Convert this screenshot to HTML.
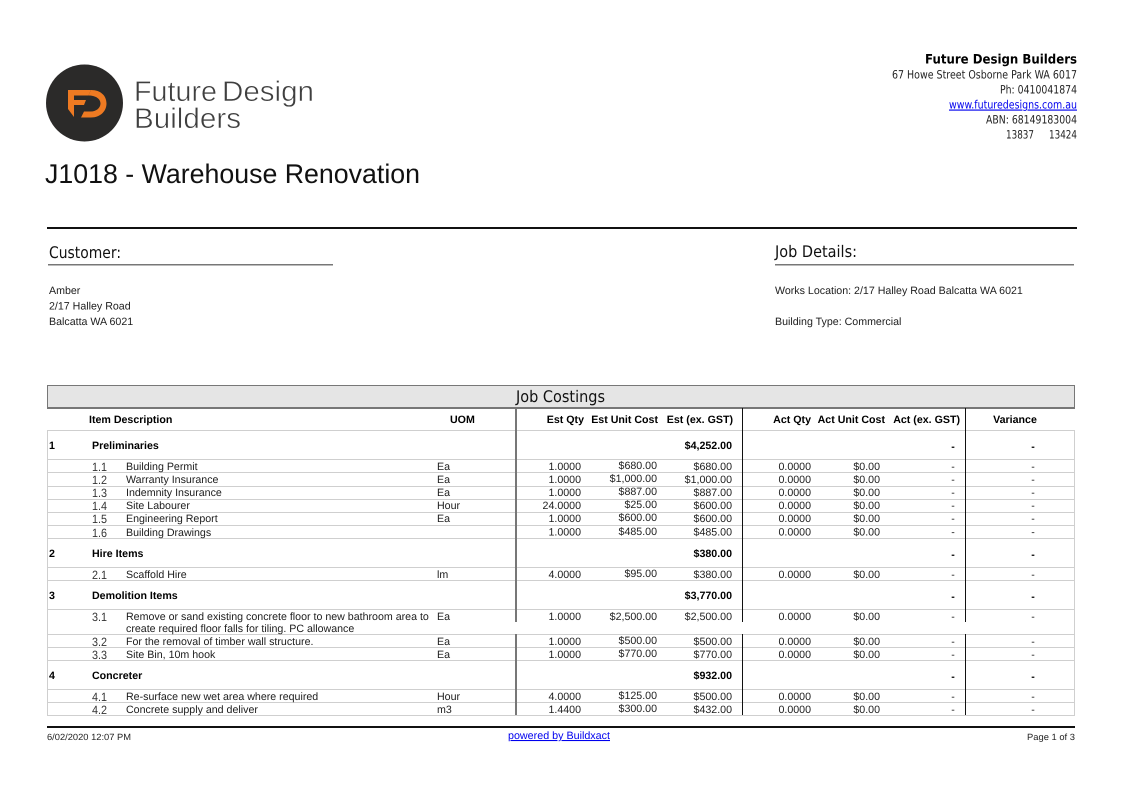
<!DOCTYPE html>
<html><head><meta charset="utf-8"><title>J1018 - Warehouse Renovation</title>
<style>
html,body{margin:0;padding:0;background:#fff}
svg{display:block}
text{font-family:"Liberation Sans",Arial,sans-serif;font-size:10.65px;fill:#1c1c1c;text-rendering:geometricPrecision}
.e{text-anchor:end}.m{text-anchor:middle}
.b{font-weight:bold;fill:#000}
.t{font-family:"DejaVu Sans",sans-serif}
.n{font-family:"DejaVu Sans",sans-serif;font-size:11.5px;fill:#222}
.o{font-size:12px;fill:#333}
.h{font-family:"DejaVu Sans",sans-serif;font-size:16px;fill:#111}
.l{stroke:#cfcfcf;stroke-width:1}
.lk{fill:#0000ee;text-decoration:underline}
.lg{fill:#3f3f3f;stroke:#fff;stroke-width:.55;font-size:28.500px}
.f{font-size:9px;fill:#222}
</style></head><body>
<svg xmlns="http://www.w3.org/2000/svg" width="1123" height="794" viewBox="0 0 1123 794">
<rect width="1123" height="794" fill="#fff"/>

<!-- logo -->
<circle cx="84.500" cy="103" r="38.500" fill="#2b2a29"/>
<path fill="#ee7a22" d="M68 90H91L88.500 95.500H74V100H86L84 105H74V117L68 109Z"/>
<path fill="#ee7a22" d="M91 90C101 90 106.500 96 106.500 103.500C106.500 111 100.500 117.500 91 117.500H81L84 111.500H91C96 111.500 100.500 108 100.500 103.500C100.500 99 96 95.500 88.500 95.500Z"/>
<text class="lg" x="134" y="101" textLength="83" lengthAdjust="spacingAndGlyphs">Future</text>
<text class="lg" x="222" y="101" textLength="92" lengthAdjust="spacingAndGlyphs">Design</text>
<text class="lg" x="134" y="128" textLength="107" lengthAdjust="spacingAndGlyphs">Builders</text>

<!-- company -->
<text class="t b" x="925" y="63.500" style="font-size:13px" textLength="152" lengthAdjust="spacingAndGlyphs">Future Design Builders</text>
<text class="n" x="892" y="78.500" textLength="185" lengthAdjust="spacingAndGlyphs">67 Howe Street Osborne Park WA 6017</text>
<text class="n" x="1000" y="93.500" textLength="77" lengthAdjust="spacingAndGlyphs">Ph: 0410041874</text>
<text class="n lk" x="949" y="108.500" textLength="128" lengthAdjust="spacingAndGlyphs" style="fill:#0000ee">www.futuredesigns.com.au</text>
<text class="n" x="986" y="123.500" textLength="91" lengthAdjust="spacingAndGlyphs">ABN: 68149183004</text>
<text class="n" x="1006" y="138.500" textLength="28" lengthAdjust="spacingAndGlyphs">13837</text>
<text class="n" x="1049" y="138.500" textLength="28" lengthAdjust="spacingAndGlyphs">13424</text>

<text x="45" y="183" style="font-size:27px;fill:#111" textLength="375" lengthAdjust="spacingAndGlyphs">J1018 - Warehouse Renovation</text>

<rect x="47" y="227" width="1030" height="2" fill="#111"/>
<text class="h" x="49" y="258" textLength="72" lengthAdjust="spacingAndGlyphs">Customer:</text>
<text class="h" x="775" y="257" textLength="82" lengthAdjust="spacingAndGlyphs">Job Details:</text>
<rect x="48" y="264" width="285" height="1.500" fill="#777"/>
<rect x="775" y="264" width="299" height="1.500" fill="#777"/>

<text x="49" y="294">Amber</text>
<text x="49" y="309.500">2/17 Halley Road</text>
<text x="49" y="325">Balcatta WA 6021</text>
<text x="775" y="294">Works Location: 2/17 Halley Road Balcatta WA 6021</text>
<text x="775" y="325">Building Type: Commercial</text>

<!-- table header -->
<rect x="47.500" y="385.500" width="1027" height="22" fill="#e5e5e5" stroke="#777" stroke-width="1"/>
<rect x="47" y="407" width="1028" height="2" fill="#777"/>
<text class="h" x="516" y="402" textLength="89" lengthAdjust="spacingAndGlyphs">Job Costings</text>

<text class="b" x="89" y="423">Item Description</text>
<text class="b" x="450" y="423">UOM</text>
<text class="b e" x="584" y="423">Est Qty</text>
<text class="b e" x="658" y="423">Est Unit Cost</text>
<text class="b e" x="733" y="423">Est (ex. GST)</text>
<text class="b e" x="811" y="423">Act Qty</text>
<text class="b e" x="885" y="423">Act Unit Cost</text>
<text class="b e" x="960" y="423">Act (ex. GST)</text>
<text class="b m" x="1015" y="423">Variance</text>

<!-- lines -->
<g class="l">
<line x1="47" x2="1074" y1="430.500" y2="430.500"/><line x1="47" x2="1074" y1="459.500" y2="459.500"/>
<line x1="47" x2="1074" y1="472.500" y2="472.500"/><line x1="47" x2="1074" y1="486.500" y2="486.500"/>
<line x1="47" x2="1074" y1="499.500" y2="499.500"/><line x1="47" x2="1074" y1="512.500" y2="512.500"/>
<line x1="47" x2="1074" y1="525.500" y2="525.500"/><line x1="47" x2="1074" y1="538.500" y2="538.500"/>
<line x1="47" x2="1074" y1="567.500" y2="567.500"/><line x1="47" x2="1074" y1="580.500" y2="580.500"/>
<line x1="47" x2="1074" y1="609.500" y2="609.500"/><line x1="47" x2="1074" y1="634.500" y2="634.500"/>
<line x1="47" x2="1074" y1="647.500" y2="647.500"/><line x1="47" x2="1074" y1="660.500" y2="660.500"/>
<line x1="47" x2="1074" y1="689.500" y2="689.500"/><line x1="47" x2="1074" y1="702.500" y2="702.500"/>
<line x1="47" x2="1074" y1="715.500" y2="715.500"/>
<line x1="47.500" x2="47.500" y1="430" y2="716"/><line x1="1074.500" x2="1074.500" y1="430" y2="716"/>
</g>
<rect x="515" y="408" width="2" height="214" fill="#777"/><rect x="515" y="634" width="2" height="81" fill="#777"/>
<rect x="742" y="408" width="1" height="214" fill="#111"/><rect x="742" y="634" width="1" height="81" fill="#111"/>
<rect x="965" y="408" width="1" height="214" fill="#111"/><rect x="965" y="634" width="1" height="81" fill="#111"/>

<!-- group 1 -->
<text class="b" x="49" y="449">1</text><text class="b" x="92" y="449">Preliminaries</text><text class="b e" x="732" y="449">$4,252.00</text><text class="b m" x="953" y="450">-</text><text class="b m" x="1033" y="450">-</text>

<text class="o" x="92" y="471" textLength="15" lengthAdjust="spacingAndGlyphs">1.1</text><text x="126" y="470">Building Permit</text><text x="437" y="470">Ea</text><text class="e" x="581" y="470">1.0000</text><text class="e" x="657" y="469">$680.00</text><text class="e" x="732" y="470">$680.00</text><text class="e" x="811" y="470">0.0000</text><text class="e" x="880" y="470">$0.00</text><text class="m" x="953" y="470">-</text><text class="m" x="1033" y="470">-</text>

<text class="o" x="92" y="484" textLength="15" lengthAdjust="spacingAndGlyphs">1.2</text><text x="126" y="483">Warranty Insurance</text><text x="437" y="483">Ea</text><text class="e" x="581" y="483">1.0000</text><text class="e" x="657" y="482">$1,000.00</text><text class="e" x="732" y="483">$1,000.00</text><text class="e" x="811" y="483">0.0000</text><text class="e" x="880" y="483">$0.00</text><text class="m" x="953" y="483">-</text><text class="m" x="1033" y="483">-</text>

<text class="o" x="92" y="497" textLength="15" lengthAdjust="spacingAndGlyphs">1.3</text><text x="126" y="496">Indemnity Insurance</text><text x="437" y="496">Ea</text><text class="e" x="581" y="496">1.0000</text><text class="e" x="657" y="495">$887.00</text><text class="e" x="732" y="496">$887.00</text><text class="e" x="811" y="496">0.0000</text><text class="e" x="880" y="496">$0.00</text><text class="m" x="953" y="496">-</text><text class="m" x="1033" y="496">-</text>

<text class="o" x="92" y="510" textLength="15" lengthAdjust="spacingAndGlyphs">1.4</text><text x="126" y="509">Site Labourer</text><text x="437" y="509">Hour</text><text class="e" x="581" y="509">24.0000</text><text class="e" x="657" y="508">$25.00</text><text class="e" x="732" y="509">$600.00</text><text class="e" x="811" y="509">0.0000</text><text class="e" x="880" y="509">$0.00</text><text class="m" x="953" y="509">-</text><text class="m" x="1033" y="509">-</text>

<text class="o" x="92" y="523" textLength="15" lengthAdjust="spacingAndGlyphs">1.5</text><text x="126" y="522">Engineering Report</text><text x="437" y="522">Ea</text><text class="e" x="581" y="522">1.0000</text><text class="e" x="657" y="521">$600.00</text><text class="e" x="732" y="522">$600.00</text><text class="e" x="811" y="522">0.0000</text><text class="e" x="880" y="522">$0.00</text><text class="m" x="953" y="522">-</text><text class="m" x="1033" y="522">-</text>

<text class="o" x="92" y="537" textLength="15" lengthAdjust="spacingAndGlyphs">1.6</text><text x="126" y="536">Building Drawings</text><text class="e" x="581" y="535.500">1.0000</text><text class="e" x="657" y="535">$485.00</text><text class="e" x="732" y="535.500">$485.00</text><text class="e" x="811" y="535.500">0.0000</text><text class="e" x="880" y="535.500">$0.00</text><text class="m" x="953" y="535.500">-</text><text class="m" x="1033" y="535.500">-</text>

<!-- group 2 -->
<text class="b" x="49" y="557">2</text><text class="b" x="92" y="557">Hire Items</text><text class="b e" x="732" y="557">$380.00</text><text class="b m" x="953" y="558">-</text><text class="b m" x="1033" y="558">-</text>
<text class="o" x="92" y="579" textLength="15" lengthAdjust="spacingAndGlyphs">2.1</text><text x="126" y="578">Scaffold Hire</text><text x="437" y="578">lm</text><text class="e" x="581" y="578">4.0000</text><text class="e" x="657" y="577">$95.00</text><text class="e" x="732" y="578">$380.00</text><text class="e" x="811" y="578">0.0000</text><text class="e" x="880" y="578">$0.00</text><text class="m" x="953" y="578">-</text><text class="m" x="1033" y="578">-</text>

<!-- group 3 -->
<text class="b" x="49" y="599">3</text><text class="b" x="92" y="599">Demolition Items</text><text class="b e" x="732" y="599">$3,770.00</text><text class="b m" x="953" y="600">-</text><text class="b m" x="1033" y="600">-</text>
<text class="o" x="92" y="621" textLength="15" lengthAdjust="spacingAndGlyphs">3.1</text><text x="126" y="620">Remove or sand existing concrete floor to new bathroom area to</text><text x="126" y="632">create required floor falls for tiling. PC allowance</text><text x="437" y="620">Ea</text><text class="e" x="581" y="620">1.0000</text><text class="e" x="657" y="620">$2,500.00</text><text class="e" x="732" y="620">$2,500.00</text><text class="e" x="811" y="620">0.0000</text><text class="e" x="880" y="620">$0.00</text><text class="m" x="953" y="620">-</text><text class="m" x="1033" y="620">-</text>

<text class="o" x="92" y="646" textLength="15" lengthAdjust="spacingAndGlyphs">3.2</text><text x="126" y="645">For the removal of timber wall structure.</text><text x="437" y="645">Ea</text><text class="e" x="581" y="645">1.0000</text><text class="e" x="657" y="644">$500.00</text><text class="e" x="732" y="645">$500.00</text><text class="e" x="811" y="645">0.0000</text><text class="e" x="880" y="645">$0.00</text><text class="m" x="953" y="645">-</text><text class="m" x="1033" y="645">-</text>

<text class="o" x="92" y="659" textLength="15" lengthAdjust="spacingAndGlyphs">3.3</text><text x="126" y="658">Site Bin, 10m hook</text><text x="437" y="658">Ea</text><text class="e" x="581" y="658">1.0000</text><text class="e" x="657" y="657">$770.00</text><text class="e" x="732" y="658">$770.00</text><text class="e" x="811" y="658">0.0000</text><text class="e" x="880" y="658">$0.00</text><text class="m" x="953" y="658">-</text><text class="m" x="1033" y="658">-</text>

<!-- group 4 -->
<text class="b" x="49" y="679">4</text><text class="b" x="92" y="679">Concreter</text><text class="b e" x="732" y="679">$932.00</text><text class="b m" x="953" y="680">-</text><text class="b m" x="1033" y="680">-</text>
<text class="o" x="92" y="701" textLength="15" lengthAdjust="spacingAndGlyphs">4.1</text><text x="126" y="700">Re-surface new wet area where required</text><text x="437" y="700">Hour</text><text class="e" x="581" y="700">4.0000</text><text class="e" x="657" y="699">$125.00</text><text class="e" x="732" y="700">$500.00</text><text class="e" x="811" y="700">0.0000</text><text class="e" x="880" y="700">$0.00</text><text class="m" x="953" y="700">-</text><text class="m" x="1033" y="700">-</text>

<text class="o" x="92" y="714" textLength="15" lengthAdjust="spacingAndGlyphs">4.2</text><text x="126" y="713">Concrete supply and deliver</text><text x="437" y="713">m3</text><text class="e" x="581" y="713">1.4400</text><text class="e" x="657" y="712">$300.00</text><text class="e" x="732" y="713">$432.00</text><text class="e" x="811" y="713">0.0000</text><text class="e" x="880" y="713">$0.00</text><text class="m" x="953" y="713">-</text><text class="m" x="1033" y="713">-</text>

<!-- footer -->
<rect x="47" y="726" width="1028" height="2" fill="#111"/>
<text class="f" x="47" y="740" textLength="84" lengthAdjust="spacingAndGlyphs">6/02/2020 12:07 PM</text>
<text class="lk" x="508" y="739" style="fill:#0000ee" textLength="102" lengthAdjust="spacingAndGlyphs">powered by Buildxact</text>
<text class="f" x="1027" y="740" textLength="48" lengthAdjust="spacingAndGlyphs">Page 1 of 3</text>
</svg>
</body></html>
